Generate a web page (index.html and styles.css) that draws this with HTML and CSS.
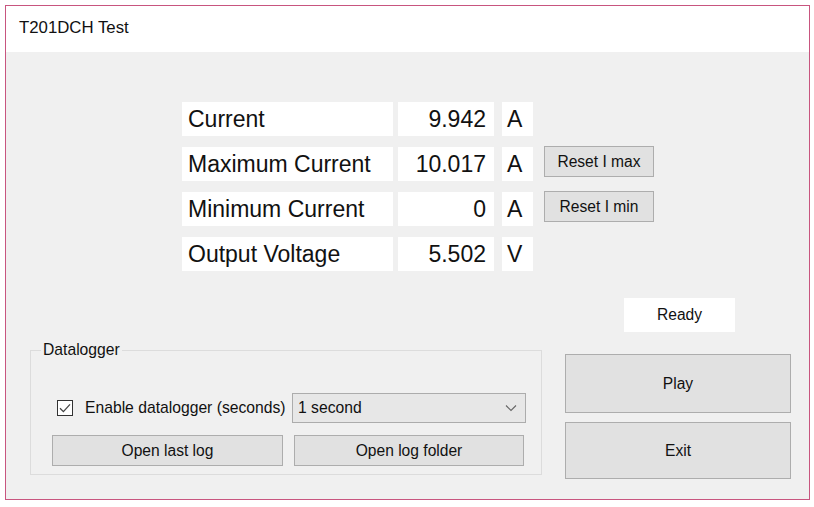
FILE: index.html
```html
<!DOCTYPE html>
<html lang="en">

<head>
    <meta charset="UTF-8">
    <meta name="viewport" content="width=device-width, initial-scale=1.0">
    <title>T201DCH Test</title>
    <link rel="stylesheet" href="styles.css">
</head>

<body>
    <div class="window">
        <div class="titlebar">T201DCH Test</div>

        <div class="client">
            <!-- Readings -->
            <div class="readings">
                <div class="cell name">Current</div>
                <div class="cell value">9.942</div>
                <div class="cell unit">A</div>
                <div class="spacer"></div>

                <div class="cell name">Maximum Current</div>
                <div class="cell value">10.017</div>
                <div class="cell unit">A</div>
                <button class="btn btn-reset" type="button">Reset I max</button>

                <div class="cell name">Minimum Current</div>
                <div class="cell value">0</div>
                <div class="cell unit">A</div>
                <button class="btn btn-reset" type="button">Reset I min</button>

                <div class="cell name">Output Voltage</div>
                <div class="cell value">5.502</div>
                <div class="cell unit">V</div>
                <div class="spacer"></div>
            </div>

            <div class="lower">
                <!-- Datalogger group -->
                <fieldset class="group">
                    <legend>Datalogger</legend>

                    <div class="log-row">
                        <label class="check">
                            <span class="checkbox">
                                <svg width="14" height="14" viewBox="0 0 14 14">
                                    <path d="M2 7.2 L5.4 10.6 L12 3.4" fill="none" stroke="#444" stroke-width="1.3" />
                                </svg>
                            </span>
                            Enable datalogger (seconds)
                        </label>
                        <div class="combo">
                            <span>1 second</span>
                            <svg width="12" height="8" viewBox="0 0 12 8">
                                <path d="M1 1.5 L6 6.5 L11 1.5" fill="none" stroke="#666" stroke-width="1.1" />
                            </svg>
                        </div>
                    </div>

                    <div class="log-buttons">
                        <button class="btn btn-log" type="button">Open last log</button>
                        <button class="btn btn-log" type="button">Open log folder</button>
                    </div>
                </fieldset>

                <!-- Status and controls -->
                <div class="side">
                    <div class="status">Ready</div>
                    <button class="btn btn-play" type="button">Play</button>
                    <button class="btn btn-exit" type="button">Exit</button>
                </div>
            </div>
        </div>
    </div>
</body>

</html>
```

FILE: styles.css
```css
/* Reset */
* {
    margin: 0;
    padding: 0;
    box-sizing: border-box;
}

body {
    font-family: 'Liberation Sans', Arial, sans-serif;
    background-color: #ffffff;
    color: #111;
}

/* Window */
.window {
    margin: 5px 0 0 5px;
    width: 805px;
    height: 495px;
    border: 1px solid #c8557f;
    display: flex;
    flex-direction: column;
}

.titlebar {
    height: 46px;
    background: #ffffff;
    padding-left: 13px;
    display: flex;
    align-items: center;
    font-size: 16.8px;
    padding-bottom: 2px;
}

.client {
    flex: 1;
    background: #f0f0f0;
    padding-top: 50px;
}

/* Readings table */
.readings {
    display: grid;
    grid-template-columns: 211px 96px 34px 116px;
    grid-auto-rows: 34px;
    column-gap: 5px;
    row-gap: 11px;
    margin-left: 176px;
}

.cell {
    background: #ffffff;
    font-size: 23px;
    display: flex;
    align-items: center;
}

.name {
    padding-left: 6px;
}

.value {
    justify-content: flex-end;
    padding-right: 8px;
}

.unit {
    margin-left: 3px;
    padding-left: 5px;
}

/* Buttons */
.btn {
    font-family: 'Liberation Sans', Arial, sans-serif;
    font-size: 15.6px;
    color: #111;
    background: #e1e1e1;
    border: 1px solid #adadad;
    cursor: pointer;
}

.btn-reset {
    margin-left: 6px;
    height: 31px;
    margin-top: -1px;
    width: 110px;
}

/* Lower area */
.lower {
    display: flex;
    margin-top: 27px;
    padding-left: 24px;
}

.group {
    width: 511px;
    height: 134px;
    margin-top: 43px;
    border: 1px solid #dcdcdc;
    padding: 34px 15px 0 21px;
}

.group legend {
    font-size: 15.7px;
    margin-left: -11px;
    padding: 0 2px;
    line-height: 18px;
}

.log-row {
    display: flex;
    align-items: center;
    height: 30px;
}

.check {
    display: flex;
    align-items: center;
    font-size: 15.7px;
    margin-left: 5px;
    width: 235px;
}

.checkbox {
    flex-shrink: 0;
    width: 16px;
    height: 16px;
    border: 1px solid #333;
    background: #ffffff;
    margin-right: 12px;
    display: flex;
    align-items: center;
    justify-content: center;
}

.combo {
    width: 234px;
    height: 30px;
    background: #e7e7e7;
    border: 1px solid #acacac;
    display: flex;
    align-items: center;
    justify-content: space-between;
    padding: 0 8px 0 5px;
    font-size: 15.7px;
}

.log-buttons {
    display: flex;
    gap: 11px;
    margin-top: 12px;
}

.btn-log {
    width: 231px;
    height: 31px;
}

.btn-log + .btn-log {
    width: 230px;
}

/* Side column */
.side {
    margin-left: 23px;
    width: 226px;
    display: flex;
    flex-direction: column;
}

.status {
    margin-left: 59px;
    width: 111px;
    height: 34px;
    background: #ffffff;
    font-size: 15.6px;
    display: flex;
    align-items: center;
    justify-content: center;
}

.btn-play {
    margin-top: 22px;
    height: 59px;
}

.btn-exit {
    margin-top: 9px;
    height: 57px;
}
```
